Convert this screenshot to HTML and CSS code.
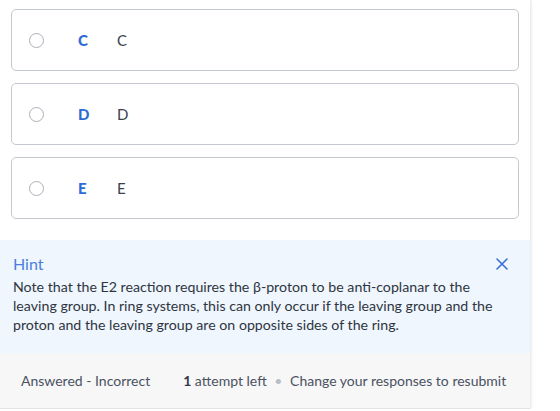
FILE: index.html
```html
<!DOCTYPE html>
<html lang="en">
  <head>
    <meta charset="UTF-8" />
    <meta name="viewport" content="width=device-width, initial-scale=1.0" />
    <title>Question</title>
    <link rel="stylesheet" href="styles.css">
  </head>

  <body>
    <main class="panel">
      <div class="choices">
        <label class="choice">
          <span class="radio"></span>
          <span class="key">C</span>
          <span class="value">C</span>
        </label>
        <label class="choice">
          <span class="radio"></span>
          <span class="key">D</span>
          <span class="value">D</span>
        </label>
        <label class="choice">
          <span class="radio"></span>
          <span class="key">E</span>
          <span class="value">E</span>
        </label>
      </div>

      <section class="hint">
        <div class="hint-head">
          <h2>Hint</h2>
          <button class="close" type="button" aria-label="Close hint">
            <svg width="12" height="12" viewBox="0 0 12 12">
              <path d="M1 1 L11 11 M11 1 L1 11" stroke="#3b6fd6" stroke-width="1.6" stroke-linecap="round" fill="none" />
            </svg>
          </button>
        </div>
        <p>
          Note that the E2 reaction requires the β-proton to be anti-coplanar to the
          leaving group. In ring systems, this can only occur if the leaving group and the
          proton and the leaving group are on opposite sides of the ring.
        </p>
      </section>

      <footer class="status">
        <span class="result">Answered - Incorrect</span>
        <span class="attempts"><b>1</b> attempt left <span class="dot">•</span> Change your responses to resubmit</span>
      </footer>
    </main>
  </body>
</html>
```

FILE: styles.css
```css
* {
  padding: 0;
  margin: 0;
  box-sizing: border-box;
}

body {
  background-color: #ffffff;
  font-family: "Lato", "Liberation Sans", sans-serif;
  color: #333a44;
}

.panel {
  width: 530px;
  background-color: #ffffff;
  box-shadow: 1px 0 3px rgba(0, 0, 0, 0.12);
}

.choices {
  display: flex;
  flex-direction: column;
  gap: 12px;
  padding: 9px 11px 21px 11px;
}

.choice {
  display: flex;
  align-items: center;
  height: 62px;
  border: 1px solid #c4c9cf;
  border-radius: 5px;
  padding-left: 17px;
  font-size: 15px;
}

.radio {
  width: 15px;
  height: 15px;
  border: 1.5px solid #aab1b9;
  border-radius: 50%;
}

.key {
  width: 39px;
  margin-left: 34px;
  font-weight: 900;
  color: #2f6ad6;
}

.value {
  color: #3a4250;
}

.hint {
  background-color: #eff6fe;
  padding: 13px 22px 19px 13px;
}

.hint-head {
  display: flex;
  justify-content: space-between;
  align-items: center;
}

.hint h2 {
  font-size: 16px;
  font-weight: 400;
  color: #4a7fdf;
  line-height: 22px;
}

.close {
  border: none;
  background: none;
  display: flex;
  cursor: pointer;
}

.hint p {
  margin-top: 2px;
  font-size: 14.2px;
  line-height: 19px;
  color: #2e3540;
}

.status {
  display: flex;
  align-items: center;
  height: 56px;
  padding-left: 21px;
  background-color: #f7f7f8;
  border-bottom: 1px solid #e2e2e2;
  font-size: 14px;
  color: #4a5260;
}

.attempts {
  margin-left: 33px;
}

.attempts b {
  color: #333a44;
}

.dot {
  color: #b8bec6;
  margin: 0 4px;
}
```
